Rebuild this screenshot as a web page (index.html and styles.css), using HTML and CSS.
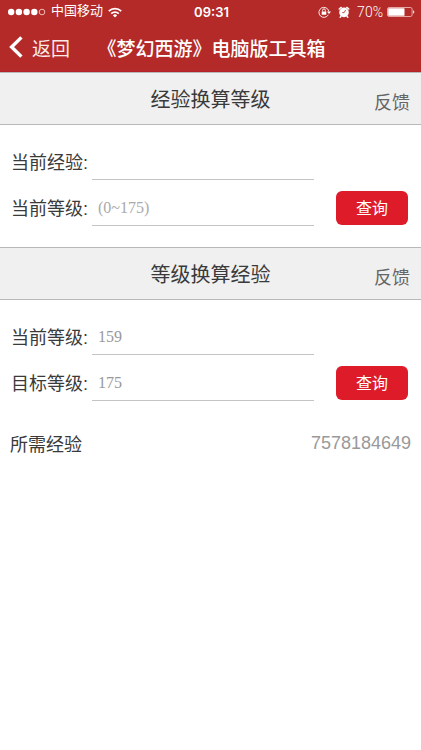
FILE: index.html
```html
<!DOCTYPE html>
<html lang="zh-CN">
<head>
<meta charset="utf-8">
<meta name="viewport" content="width=device-width, initial-scale=1">
<title>《梦幻西游》电脑版工具箱</title>
<link rel="stylesheet" href="styles.css">
</head>
<body>
<header class="top">
  <div class="status">
    <div class="status-left">
      <svg class="signal" width="38" height="8" viewBox="0 0 38 8" aria-hidden="true">
        <g fill="#fff"><circle cx="3.2" cy="4" r="3.2"/><circle cx="10.9" cy="4" r="3.2"/><circle cx="18.6" cy="4" r="3.2"/><circle cx="26.3" cy="4" r="3.2"/></g>
        <circle cx="34" cy="4" r="2.8" fill="none" stroke="#f3c9c7" stroke-width=".9"/>
      </svg>
      <span class="carrier">中国移动</span>
      <svg width="14" height="11" viewBox="0 0 14 11" aria-hidden="true">
        <g fill="none" stroke="#fff" stroke-width="1.8"><path d="M.8 4.1a8.8 8.8 0 0 1 12.4 0"/><path d="M3.2 6.7a5.4 5.4 0 0 1 7.6 0"/></g>
        <path d="M4.9 8.4a3 3 0 0 1 4.2 0L7 10.6z" fill="#fff"/>
      </svg>
    </div>
    <span class="clock">09:31</span>
    <div class="status-right">
      <svg width="13" height="12" viewBox="0 0 13 12" aria-hidden="true">
        <path d="M10.3 8.8A5 5 0 1 1 10.8 5.2" fill="none" stroke="#fff" stroke-width=".9"/>
        <path d="M9 5.4h4L11 8z" fill="#fff"/>
        <rect x="3.7" y="5.4" width="4.6" height="3.4" rx=".4" fill="#fff"/>
        <path d="M4.6 5.5V4.3a1.4 1.4 0 0 1 2.8 0v1.2" fill="none" stroke="#fff" stroke-width=".9"/>
      </svg>
      <svg class="alarm" width="12" height="12" viewBox="0 0 12 12" aria-hidden="true">
        <circle cx="6" cy="6.4" r="4.8" fill="#fff"/>
        <path d="M1.2 3 3.2 1.4M10.8 3 8.8 1.4M3 10.2l-.8 1M9 10.2l.8 1" stroke="#fff" stroke-width="1.4" stroke-linecap="round"/>
        <path d="M7.6 4 6.2 6.6H4.2" fill="none" stroke="#b32a28" stroke-width=".8"/>
      </svg>
      <span class="percent">70%</span>
      <svg width="28" height="10" viewBox="0 0 28 10" aria-hidden="true">
        <rect x=".5" y=".5" width="24.6" height="9" rx="1.6" fill="none" stroke="#f3c9c7" stroke-width=".8"/>
        <rect x="1.2" y="1.2" width="16.3" height="7.6" rx=".6" fill="#fff"/>
        <path d="M26.2 3.2a2 2 0 0 1 0 3.6z" fill="#fff"/>
      </svg>
    </div>
  </div>
  <nav class="nav">
    <a class="back" href="#">
      <svg width="14" height="22" viewBox="0 0 14 22" aria-hidden="true"><path d="M12.4 1.4 2.6 11l9.8 9.6" fill="none" stroke="#fff" stroke-width="3.4"/></svg>
      返回
    </a>
    <h1 class="title">《梦幻西游》电脑版工具箱</h1>
  </nav>
</header>
<main>
  <section>
    <div class="heading">
      <h2>经验换算等级</h2>
      <a class="feedback" href="#">反馈</a>
    </div>
    <form class="form">
      <div class="row">
        <label for="exp">当前经验:</label>
        <input id="exp" type="text">
      </div>
      <div class="row">
        <label for="level">当前等级:</label>
        <input id="level" type="text" placeholder="(0~175)">
        <button type="button">查询</button>
      </div>
    </form>
  </section>
  <section>
    <div class="heading">
      <h2>等级换算经验</h2>
      <a class="feedback" href="#">反馈</a>
    </div>
    <form class="form">
      <div class="row">
        <label for="from">当前等级:</label>
        <input id="from" type="text" value="159">
      </div>
      <div class="row">
        <label for="to">目标等级:</label>
        <input id="to" type="text" value="175">
        <button type="button">查询</button>
      </div>
    </form>
    <div class="result">
      <span>所需经验</span>
      <output class="value">7578184649</output>
    </div>
  </section>
</main>
</body>
</html>
```
FILE: styles.css
```css
* {
  box-sizing: border-box;
}

body {
  margin: 0;
  background: #fff;
  color: #3a3a3a;
  font-family: "Liberation Sans", "Noto Sans CJK SC", sans-serif;
  font-size: 18px;
}

h1,
h2 {
  margin: 0;
}

a {
  color: inherit;
  text-decoration: none;
}

.top {
  height: 72px;
  background: #b32a28;
  color: #fff;
  border-bottom: 1px solid #b5202a;
}

.status {
  display: grid;
  grid-template-columns: 1fr auto 1fr;
  align-items: center;
  height: 24px;
  padding: 0 6px 0 8px;
  font-family: Roboto, "Noto Sans CJK SC", sans-serif;
  font-size: 13px;
}

.status-left,
.status-right {
  display: flex;
  align-items: center;
}

.status-left {
  gap: 5px;
}

.carrier {
  line-height: 16px;
  padding-bottom: 2px;
}

.status-right {
  justify-content: flex-end;
  gap: 4px;
}

.alarm {
  margin: 0 3px;
}

.clock {
  font-family: Inter, sans-serif;
  font-weight: 600;
}

.percent {
  font-size: 14px;
  font-weight: 300;
}

.nav {
  display: grid;
  grid-template-columns: 1fr auto 1fr;
  align-items: center;
  height: 46px;
  padding: 0 7px 0 9px;
}

.back {
  display: flex;
  align-items: center;
  gap: 9px;
  color: #fbe9e7;
  font-size: 19px;
}

.title {
  font-size: 19px;
  font-weight: 500;
}

.heading {
  display: grid;
  grid-template-columns: 1fr auto 1fr;
  align-items: center;
  height: 53px;
  padding: 0 11px;
  background: #f0f0f0;
  border-top: 1px solid #b8b8b8;
  border-bottom: 1px solid #b8b8b8;
}

.heading h2 {
  grid-column: 2;
  font-size: 20px;
  font-weight: 400;
}

.feedback {
  justify-self: end;
  padding-top: 4px;
  color: #666;
}

.form {
  padding: 8px 13px 22px 11px;
}

.row {
  display: flex;
  align-items: flex-end;
  height: 46px;
}

.row label {
  flex: 0 0 81px;
  line-height: 32px;
}

.row input {
  flex: 0 1 222px;
  min-width: 0;
  height: 36px;
  margin-bottom: -1px;
  padding: 0 6px;
  border: 0;
  border-bottom: 1px solid #c4c4c4;
  border-radius: 0;
  background: transparent;
  color: #999;
  font: 16px "Liberation Serif", serif;
  outline: 0;
}

.row input::placeholder {
  color: #aaa;
}

.row button {
  flex: 0 0 72px;
  height: 34px;
  margin-left: auto;
  padding: 0 0 2px;
  border: 0;
  border-radius: 6px;
  background: #de1b29;
  color: #fff;
  font-family: inherit;
  font-size: 16px;
}

.result {
  display: flex;
  align-items: center;
  justify-content: space-between;
  height: 42px;
  padding: 0 10px;
}

.value {
  color: #999;
}
```
